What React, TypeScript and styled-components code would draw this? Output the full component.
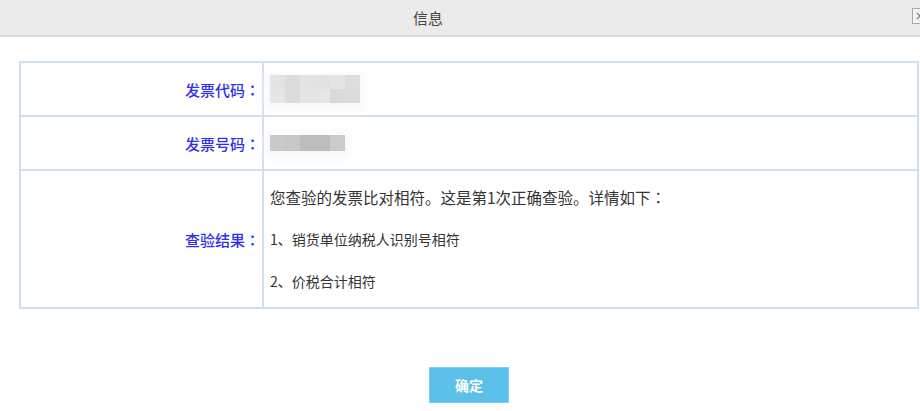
import React from "react";
import styled, { createGlobalStyle } from "styled-components";

const Global = createGlobalStyle`
  html, body { margin: 0; padding: 0; background: #fff; }
  body { font-family: "Noto Sans CJK SC", "Noto Sans", sans-serif; overflow: hidden; }
`;

const Dialog = styled.div`
  width: 920px;
  height: 411px;
  display: flex;
  flex-direction: column;
  background: #fff;
`;

const Header = styled.div`
  position: relative;
  height: 35px;
  background: #ebebeb;
  border-bottom: 2px solid #dedede;
  display: flex;
  align-items: center;
  justify-content: center;
  padding-right: 64px;
  font-size: 15px;
  color: #444;
`;

const Close = styled.div`
  position: absolute;
  right: -8px;
  top: 8px;
  width: 14px;
  height: 14px;
  border: 1px solid #a8a8a8;
  background: #f4f4f4;
  display: flex;
  align-items: center;
  justify-content: center;
`;

const Body = styled.div`
  padding: 24px 1px 0 19px;
`;

const Table = styled.table`
  width: 100%;
  border-collapse: collapse;
  border: 2px solid #d2e0eb;
`;

const Row = styled.tr<{ $h: number }>`
  height: ${(p) => p.$h}px;
`;

const Label = styled.td`
  width: 239px;
  padding: 0 2px 0 0;
  border: 2px solid #d2e0eb;
  text-align: right;
  vertical-align: middle;
  color: #3030ec;
  font-size: 15px;
  font-weight: 500;
  white-space: nowrap;
`;

const Colon = styled.span`
  font-family: "Noto Sans CJK TC", sans-serif;
`;

const Value = styled.td`
  padding: 5px 0 5px 6px;
  border: 2px solid #d2e0eb;
  vertical-align: middle;
  color: #333;
`;

const Line = styled.div<{ $size: number }>`
  height: 42px;
  line-height: 42px;
  font-size: ${(p) => p.$size}px;
  white-space: nowrap;
`;

const Mosaic = styled.div<{ $cols: number; $h: number }>`
  display: grid;
  grid-template-columns: repeat(${(p) => p.$cols}, 15px);
  grid-auto-rows: ${(p) => p.$h}px;
  width: max-content;
  filter: blur(0.4px);
  box-shadow: 0 3px 10px 4px rgba(245, 246, 250, 0.9);
`;

const Tile = styled.div<{ $c: string }>`
  background: ${(p) => p.$c};
`;

const Footer = styled.div`
  display: flex;
  justify-content: center;
  padding: 58px 0 0 18px;
`;

const Button = styled.button`
  width: 80px;
  height: 36px;
  border: 1px solid #7fd0ee;
  background: #5bc1e9;
  color: #fff;
  font-family: "Noto Sans CJK SC", sans-serif;
  font-weight: bold;
  font-size: 14px;
  padding: 0;
  cursor: pointer;
`;

const mosaic1 = [
  "#e3e3e3", "#dcdcdc", "#e3e3e3", "#e2e2e2", "#e5e5e5", "#dddddd",
  "#e6e6e6", "#dcdcdc", "#e5e5e5", "#e6e6e6", "#dadada", "#dcdcdc",
];
const mosaic2 = ["#cacaca", "#c8c8c8", "#bdbdbd", "#bdbdbd", "#cbcbcb"];

const labels = ["发票代码", "发票号码", "查验结果"];

export default function App() {
  return (
    <>
      <Global />
      <Dialog>
        <Header>
          信息
          <Close>
            <svg width="8" height="8" viewBox="0 0 8 8">
              <path d="M1 1L7 7M7 1L1 7" stroke="#777" strokeWidth="1.2" />
            </svg>
          </Close>
        </Header>
        <Body>
          <Table>
            <tbody>
              <Row $h={54}>
                <Label>
                  {labels[0]}
                  <Colon>：</Colon>
                </Label>
                <Value>
                  <Mosaic $cols={6} $h={14}>
                    {mosaic1.map((c, i) => (
                      <Tile key={i} $c={c} />
                    ))}
                  </Mosaic>
                </Value>
              </Row>
              <Row $h={54}>
                <Label>
                  {labels[1]}
                  <Colon>：</Colon>
                </Label>
                <Value>
                  <Mosaic $cols={5} $h={16}>
                    {mosaic2.map((c, i) => (
                      <Tile key={i} $c={c} />
                    ))}
                  </Mosaic>
                </Value>
              </Row>
              <Row $h={137}>
                <Label>
                  {labels[2]}
                  <Colon>：</Colon>
                </Label>
                <Value>
                  <Line $size={15.5}>
                    您查验的发票比对相符。这是第1次正确查验。详情如下<Colon>：</Colon>
                  </Line>
                  <Line $size={14}>1、销货单位纳税人识别号相符</Line>
                  <Line $size={14}>2、价税合计相符</Line>
                </Value>
              </Row>
            </tbody>
          </Table>
        </Body>
        <Footer>
          <Button>确定</Button>
        </Footer>
      </Dialog>
    </>
  );
}
